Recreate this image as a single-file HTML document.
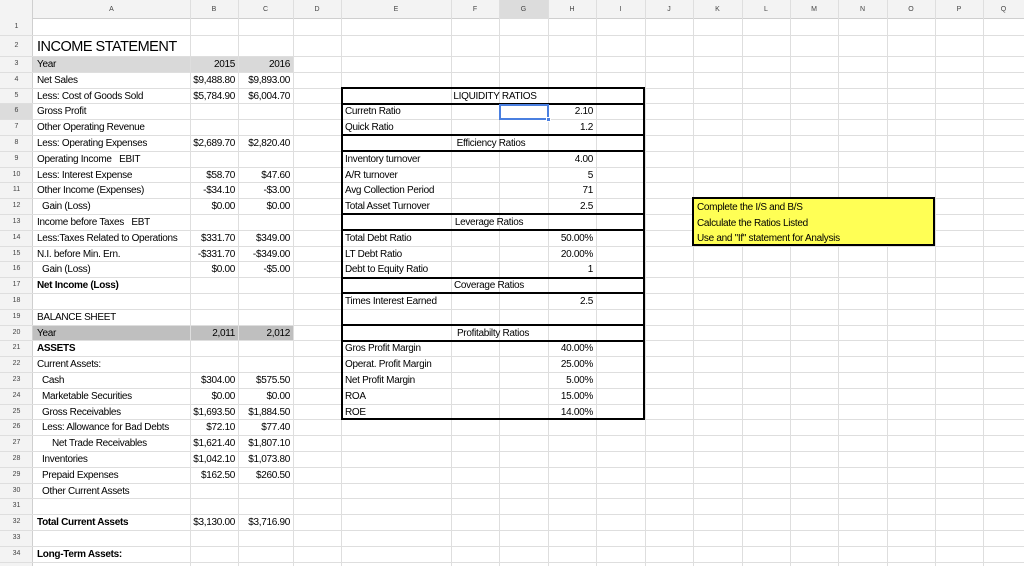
<!DOCTYPE html>
<html><head><meta charset="utf-8"><style>
*{margin:0;padding:0;box-sizing:border-box}
body{width:1024px;height:566px;overflow:hidden;background:#fff;position:relative;font-family:"Liberation Sans",sans-serif;color:#000}
.hl{position:absolute;left:0;width:1024px;height:1px;background:#dedede}
.vl{position:absolute;top:0;height:566px;width:1px;background:#dedede}
.c{position:absolute;height:16px;line-height:17px;font-size:10px;letter-spacing:-0.3px;white-space:nowrap}
.r{text-align:right;padding-right:3px}
.ctr{text-align:center}
.rn{position:absolute;left:0;width:33px;text-align:center;font-size:7px;color:#444;height:16px;line-height:16px}
.ch{position:absolute;top:0;height:19px;line-height:19px;text-align:center;font-size:7px;color:#444}
.tk{position:absolute;background:#000}
b{font-weight:bold}
</style></head><body>
<div style="position:absolute;left:0;top:0;width:1024px;height:19px;background:#f3f3f3;border-bottom:1px solid #cfcfcf"></div>
<div style="position:absolute;left:0;top:0;width:33px;height:566px;background:#f3f3f3;border-right:1px solid #cfcfcf"></div>
<div style="position:absolute;left:499px;top:0;width:49px;height:19px;background:#dcdcdc"></div>
<div style="position:absolute;left:0;top:103.4px;width:33px;height:15.8px;background:#dcdcdc"></div>
<div style="position:absolute;left:33px;top:56px;width:260px;height:15.8px;background:#d9d9d9"></div>
<div style="position:absolute;left:33px;top:324.6px;width:260px;height:15.8px;background:#bfbfbf"></div>
<div class="hl" style="top:35px"></div><div class="hl" style="top:56px"></div>
<div class="hl" style="top:71.8px"></div><div class="hl" style="top:87.6px"></div><div class="hl" style="top:103.4px"></div><div class="hl" style="top:119.2px"></div><div class="hl" style="top:135px"></div><div class="hl" style="top:150.8px"></div><div class="hl" style="top:166.6px"></div><div class="hl" style="top:182.4px"></div><div class="hl" style="top:198.2px"></div><div class="hl" style="top:214px"></div><div class="hl" style="top:229.8px"></div><div class="hl" style="top:245.6px"></div><div class="hl" style="top:261.4px"></div><div class="hl" style="top:277.2px"></div><div class="hl" style="top:293px"></div><div class="hl" style="top:308.8px"></div><div class="hl" style="top:324.6px"></div><div class="hl" style="top:340.4px"></div><div class="hl" style="top:356.2px"></div><div class="hl" style="top:372px"></div><div class="hl" style="top:387.8px"></div><div class="hl" style="top:403.6px"></div><div class="hl" style="top:419.4px"></div><div class="hl" style="top:435.2px"></div><div class="hl" style="top:451px"></div><div class="hl" style="top:466.8px"></div><div class="hl" style="top:482.6px"></div><div class="hl" style="top:498.4px"></div><div class="hl" style="top:514.2px"></div><div class="hl" style="top:530px"></div><div class="hl" style="top:545.8px"></div><div class="hl" style="top:561.6px"></div>
<div class="vl" style="left:190px"></div><div class="vl" style="left:238px"></div><div class="vl" style="left:293px"></div><div class="vl" style="left:341px"></div><div class="vl" style="left:451px"></div><div class="vl" style="left:499px"></div><div class="vl" style="left:548px"></div><div class="vl" style="left:596px"></div><div class="vl" style="left:645px"></div><div class="vl" style="left:693px"></div><div class="vl" style="left:742px"></div><div class="vl" style="left:790px"></div><div class="vl" style="left:838px"></div><div class="vl" style="left:887px"></div><div class="vl" style="left:935px"></div><div class="vl" style="left:983px"></div>
<div class="ch" style="left:33px;width:157px">A</div><div class="ch" style="left:190px;width:48px">B</div><div class="ch" style="left:238px;width:55px">C</div><div class="ch" style="left:293px;width:48px">D</div><div class="ch" style="left:341px;width:110px">E</div><div class="ch" style="left:451px;width:48px">F</div><div class="ch" style="left:499px;width:49px">G</div><div class="ch" style="left:548px;width:48px">H</div><div class="ch" style="left:596px;width:49px">I</div><div class="ch" style="left:645px;width:48px">J</div><div class="ch" style="left:693px;width:49px">K</div><div class="ch" style="left:742px;width:48px">L</div><div class="ch" style="left:790px;width:48px">M</div><div class="ch" style="left:838px;width:49px">N</div><div class="ch" style="left:887px;width:48px">O</div><div class="ch" style="left:935px;width:48px">P</div><div class="ch" style="left:983px;width:41px">Q</div>
<div class="rn" style="top:19px">1</div><div class="rn" style="top:38px">2</div>
<div class="rn" style="top:56px">3</div><div class="rn" style="top:71.8px">4</div><div class="rn" style="top:87.6px">5</div><div class="rn" style="top:103.4px">6</div><div class="rn" style="top:119.2px">7</div><div class="rn" style="top:135px">8</div><div class="rn" style="top:150.8px">9</div><div class="rn" style="top:166.6px">10</div><div class="rn" style="top:182.4px">11</div><div class="rn" style="top:198.2px">12</div><div class="rn" style="top:214px">13</div><div class="rn" style="top:229.8px">14</div><div class="rn" style="top:245.6px">15</div><div class="rn" style="top:261.4px">16</div><div class="rn" style="top:277.2px">17</div><div class="rn" style="top:293px">18</div><div class="rn" style="top:308.8px">19</div><div class="rn" style="top:324.6px">20</div><div class="rn" style="top:340.4px">21</div><div class="rn" style="top:356.2px">22</div><div class="rn" style="top:372px">23</div><div class="rn" style="top:387.8px">24</div><div class="rn" style="top:403.6px">25</div><div class="rn" style="top:419.4px">26</div><div class="rn" style="top:435.2px">27</div><div class="rn" style="top:451px">28</div><div class="rn" style="top:466.8px">29</div><div class="rn" style="top:482.6px">30</div><div class="rn" style="top:498.4px">31</div><div class="rn" style="top:514.2px">32</div><div class="rn" style="top:530px">33</div><div class="rn" style="top:545.8px">34</div>
<div class="c" style="left:37px;top:37px;font-size:14.5px;line-height:20px;letter-spacing:-0.5px">INCOME STATEMENT</div>
<div class="c" style="left:37px;top:56px">Year</div><div class="c r" style="left:190px;top:56px;width:48px">2015</div><div class="c r" style="left:238px;top:56px;width:55px">2016</div>
<div class="c" style="left:37px;top:71.8px">Net Sales</div><div class="c r" style="left:180px;top:71.8px;width:58px">$9,488.80</div><div class="c r" style="left:238px;top:71.8px;width:55px">$9,893.00</div>
<div class="c" style="left:37px;top:87.6px">Less: Cost of Goods Sold</div><div class="c r" style="left:180px;top:87.6px;width:58px">$5,784.90</div><div class="c r" style="left:238px;top:87.6px;width:55px">$6,004.70</div>
<div class="c" style="left:37px;top:103.4px">Gross Profit</div>
<div class="c" style="left:37px;top:119.2px">Other Operating Revenue</div>
<div class="c" style="left:37px;top:135px">Less: Operating Expenses</div><div class="c r" style="left:180px;top:135px;width:58px">$2,689.70</div><div class="c r" style="left:238px;top:135px;width:55px">$2,820.40</div>
<div class="c" style="left:37px;top:150.8px">Operating Income &nbsp; EBIT</div>
<div class="c" style="left:37px;top:166.6px">Less: Interest Expense</div><div class="c r" style="left:180px;top:166.6px;width:58px">$58.70</div><div class="c r" style="left:238px;top:166.6px;width:55px">$47.60</div>
<div class="c" style="left:37px;top:182.4px">Other Income (Expenses)</div><div class="c r" style="left:180px;top:182.4px;width:58px">-$34.10</div><div class="c r" style="left:238px;top:182.4px;width:55px">-$3.00</div>
<div class="c" style="left:42px;top:198.2px">Gain (Loss)</div><div class="c r" style="left:180px;top:198.2px;width:58px">$0.00</div><div class="c r" style="left:238px;top:198.2px;width:55px">$0.00</div>
<div class="c" style="left:37px;top:214px">Income before Taxes &nbsp; EBT</div>
<div class="c" style="left:37px;top:229.8px">Less:Taxes Related to Operations</div><div class="c r" style="left:180px;top:229.8px;width:58px">$331.70</div><div class="c r" style="left:238px;top:229.8px;width:55px">$349.00</div>
<div class="c" style="left:37px;top:245.6px">N.I. before Min. Ern.</div><div class="c r" style="left:180px;top:245.6px;width:58px">-$331.70</div><div class="c r" style="left:238px;top:245.6px;width:55px">-$349.00</div>
<div class="c" style="left:42px;top:261.4px">Gain (Loss)</div><div class="c r" style="left:180px;top:261.4px;width:58px">$0.00</div><div class="c r" style="left:238px;top:261.4px;width:55px">-$5.00</div>
<div class="c" style="left:37px;top:277.2px"><b>Net Income (Loss)</b></div>
<div class="c" style="left:37px;top:308.8px">BALANCE SHEET</div>
<div class="c" style="left:37px;top:324.6px">Year</div><div class="c r" style="left:190px;top:324.6px;width:48px">2,011</div><div class="c r" style="left:238px;top:324.6px;width:55px">2,012</div>
<div class="c" style="left:37px;top:340.4px"><b>ASSETS</b></div>
<div class="c" style="left:37px;top:356.2px">Current Assets:</div>
<div class="c" style="left:42px;top:372px">Cash</div><div class="c r" style="left:180px;top:372px;width:58px">$304.00</div><div class="c r" style="left:238px;top:372px;width:55px">$575.50</div>
<div class="c" style="left:42px;top:387.8px">Marketable Securities</div><div class="c r" style="left:180px;top:387.8px;width:58px">$0.00</div><div class="c r" style="left:238px;top:387.8px;width:55px">$0.00</div>
<div class="c" style="left:42px;top:403.6px">Gross Receivables</div><div class="c r" style="left:180px;top:403.6px;width:58px">$1,693.50</div><div class="c r" style="left:238px;top:403.6px;width:55px">$1,884.50</div>
<div class="c" style="left:42px;top:419.4px">Less: Allowance for Bad Debts</div><div class="c r" style="left:180px;top:419.4px;width:58px">$72.10</div><div class="c r" style="left:238px;top:419.4px;width:55px">$77.40</div>
<div class="c" style="left:52px;top:435.2px">Net Trade Receivables</div><div class="c r" style="left:180px;top:435.2px;width:58px">$1,621.40</div><div class="c r" style="left:238px;top:435.2px;width:55px">$1,807.10</div>
<div class="c" style="left:42px;top:451px">Inventories</div><div class="c r" style="left:180px;top:451px;width:58px">$1,042.10</div><div class="c r" style="left:238px;top:451px;width:55px">$1,073.80</div>
<div class="c" style="left:42px;top:466.8px">Prepaid Expenses</div><div class="c r" style="left:180px;top:466.8px;width:58px">$162.50</div><div class="c r" style="left:238px;top:466.8px;width:55px">$260.50</div>
<div class="c" style="left:42px;top:482.6px">Other Current Assets</div>
<div class="c" style="left:37px;top:514.2px"><b>Total Current Assets</b></div><div class="c r" style="left:180px;top:514.2px;width:58px">$3,130.00</div><div class="c r" style="left:238px;top:514.2px;width:55px">$3,716.90</div>
<div class="c" style="left:37px;top:545.8px"><b>Long-Term Assets:</b></div>
<div class="tk" style="left:341px;top:87px;width:2px;height:333px"></div>
<div class="tk" style="left:643px;top:87px;width:2px;height:333px"></div>
<div class="tk" style="left:341px;top:87px;width:304px;height:2px"></div>
<div class="tk" style="left:341px;top:102.5px;width:304px;height:2px"></div>
<div class="tk" style="left:341px;top:134px;width:304px;height:2px"></div>
<div class="tk" style="left:341px;top:150px;width:304px;height:2px"></div>
<div class="tk" style="left:341px;top:213px;width:304px;height:2px"></div>
<div class="tk" style="left:341px;top:229px;width:304px;height:2px"></div>
<div class="tk" style="left:341px;top:276.5px;width:304px;height:2px"></div>
<div class="tk" style="left:341px;top:292px;width:304px;height:2px"></div>
<div class="tk" style="left:341px;top:324px;width:304px;height:2px"></div>
<div class="tk" style="left:341px;top:339.5px;width:304px;height:2px"></div>
<div class="tk" style="left:341px;top:418px;width:304px;height:2px"></div>
<div class="c ctr" style="left:443px;top:87.6px;width:104px">LIQUIDITY RATIOS</div>
<div class="c" style="left:345px;top:103.4px">Curretn Ratio</div><div class="c r" style="left:548px;top:103.4px;width:48px">2.10</div>
<div class="c" style="left:345px;top:119.2px">Quick Ratio</div><div class="c r" style="left:548px;top:119.2px;width:48px">1.2</div>
<div class="c ctr" style="left:443px;top:135px;width:96px">Efficiency Ratios</div>
<div class="c" style="left:345px;top:150.8px">Inventory turnover</div><div class="c r" style="left:548px;top:150.8px;width:48px">4.00</div>
<div class="c" style="left:345px;top:166.6px">A/R turnover</div><div class="c r" style="left:548px;top:166.6px;width:48px">5</div>
<div class="c" style="left:345px;top:182.4px">Avg Collection Period</div><div class="c r" style="left:548px;top:182.4px;width:48px">71</div>
<div class="c" style="left:345px;top:198.2px">Total Asset Turnover</div><div class="c r" style="left:548px;top:198.2px;width:48px">2.5</div>
<div class="c ctr" style="left:443px;top:214px;width:92px">Leverage Ratios</div>
<div class="c" style="left:345px;top:229.8px">Total Debt Ratio</div><div class="c r" style="left:538px;top:229.8px;width:58px">50.00%</div>
<div class="c" style="left:345px;top:245.6px">LT Debt Ratio</div><div class="c r" style="left:538px;top:245.6px;width:58px">20.00%</div>
<div class="c" style="left:345px;top:261.4px">Debt to Equity Ratio</div><div class="c r" style="left:548px;top:261.4px;width:48px">1</div>
<div class="c ctr" style="left:443px;top:277.2px;width:92px">Coverage Ratios</div>
<div class="c" style="left:345px;top:293px">Times Interest Earned</div><div class="c r" style="left:548px;top:293px;width:48px">2.5</div>
<div class="c ctr" style="left:443px;top:324.6px;width:100px">Profitabilty Ratios</div>
<div class="c" style="left:345px;top:340.4px">Gros Profit Margin</div><div class="c r" style="left:538px;top:340.4px;width:58px">40.00%</div>
<div class="c" style="left:345px;top:356.2px">Operat. Profit Margin</div><div class="c r" style="left:538px;top:356.2px;width:58px">25.00%</div>
<div class="c" style="left:345px;top:372px">Net Profit Margin</div><div class="c r" style="left:538px;top:372px;width:58px">5.00%</div>
<div class="c" style="left:345px;top:387.8px">ROA</div><div class="c r" style="left:538px;top:387.8px;width:58px">15.00%</div>
<div class="c" style="left:345px;top:403.6px">ROE</div><div class="c r" style="left:538px;top:403.6px;width:58px">14.00%</div>
<div style="position:absolute;left:499px;top:103.5px;width:50px;height:16px;border:2px solid #4a7fe0"></div>
<div style="position:absolute;left:546px;top:116.5px;width:5px;height:5px;background:#4a7fe0;border:1px solid #fff"></div>
<div style="position:absolute;left:692px;top:197px;width:243px;height:49px;background:#ffff55;border:2px solid #000"></div>
<div class="c" style="left:697px;top:199px">Complete the I/S and B/S</div>
<div class="c" style="left:697px;top:214.5px">Calculate the Ratios Listed</div>
<div class="c" style="left:697px;top:229.8px">Use and "If" statement for Analysis</div>
</body></html>
